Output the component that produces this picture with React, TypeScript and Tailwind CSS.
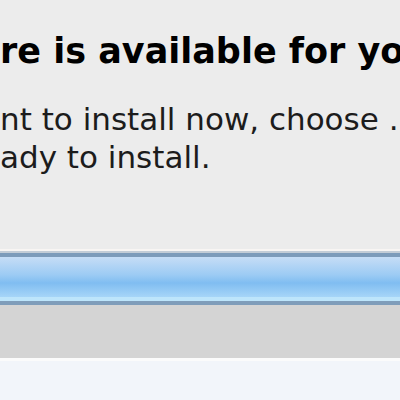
export default function App() {
  return (
    <div className="w-[400px] h-[400px] overflow-hidden bg-[#ececec] flex flex-col font-['DejaVu_Sans',sans-serif]">
      {/* Message text */}
      <div className="pt-[31px] whitespace-nowrap">
        <h1 className="text-[35px] leading-[40px] font-bold text-black">
          re is available for your computer.
        </h1>
        <p className="mt-[29px] text-[31px] leading-[38px] text-[#1c1c1c]">
          nt to install now, choose ...
          <br />
          ady to install.
        </p>
      </div>

      {/* Selected list row */}
      <div className="mt-[73px] flex flex-col">
        <div className="h-[2px] bg-[#f8f5f3]" />
        <div className="h-[2px] bg-[#c3ccd6]" />
        <div className="h-[4px] bg-[#7d9bba]" />
        <div className="h-[40px] bg-[linear-gradient(to_bottom,#c6ddf6,#9ccbf4_45%,#80bdf1_65%,#a6d5f8)]" />
        <div className="h-[4px] bg-[#bde5fb]" />
        <div className="h-[4px] bg-[#7f9dba]" />
      </div>

      {/* Unselected row */}
      <div className="h-[53px] bg-[#d4d4d4]" />
      <div className="h-[3px] bg-[#fbfbfb]" />
      <div className="flex-1 bg-[#f2f5fa]" />
    </div>
  );
}
